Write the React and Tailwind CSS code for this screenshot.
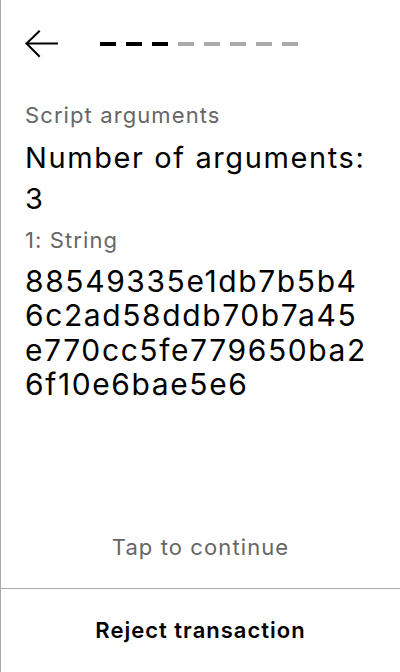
import React from "react";

export default function App() {
  const dashes = [1, 1, 1, 0, 0, 0, 0, 0];
  const hex = ["88549335e1db7b5b4", "6c2ad58ddb70b7a45", "e770cc5fe779650ba2", "6f10e6bae5e6"];
  return (
    <div
      className="h-[672px] w-[400px] flex flex-col bg-white border-l border-[#aaaaaa] text-black"
      style={{ fontFamily: "Inter, 'Noto Sans', sans-serif" }}
    >
      <div className="flex items-center pt-[30px] pl-[24px] h-[57px]">
        <svg width="34" height="28" viewBox="0 0 34 28" className="shrink-0">
          <path d="M14 1.5 L1.5 13.5 L14 26 M1.5 13.5 H32" fill="none" stroke="#000" strokeWidth="2" strokeLinecap="square" />
        </svg>
        <div className="flex gap-[10px] ml-[41px]">
          {dashes.map((d, i) => (
            <div key={i} className={d ? "w-[16px] h-[4px] bg-black" : "w-[16px] h-[4px] bg-[#aaaaaa]"} />
          ))}
        </div>
      </div>
      <div className="px-[24px] pt-[44px]">
        <div className="text-[22px] leading-[28px] tracking-[1.1px] text-[#666666]">Script arguments</div>
        <div className="text-[29px] leading-[41px] tracking-[1.6px] mt-[8px]">
          <div>Number of arguments:</div>
          <div>3</div>
        </div>
        <div className="text-[22px] leading-[28px] tracking-[1.1px] text-[#666666] mt-[7px]">1: String</div>
        <div className="text-[30px] leading-[34.4px] tracking-[1.6px] mt-[10px] whitespace-nowrap">
          {hex.map((h, i) => (
            <div key={i}>{h}</div>
          ))}
        </div>
      </div>
      <div className="flex-1" />
      <div className="text-center text-[22px] leading-[28px] tracking-[1.1px] text-[#666666] pb-[27px]">Tap to continue</div>
      <div className="border-t border-[#aaaaaa] h-[84px] flex items-center justify-center">
        <span className="text-[22px] font-semibold tracking-[1px]">Reject transaction</span>
      </div>
    </div>
  );
}
